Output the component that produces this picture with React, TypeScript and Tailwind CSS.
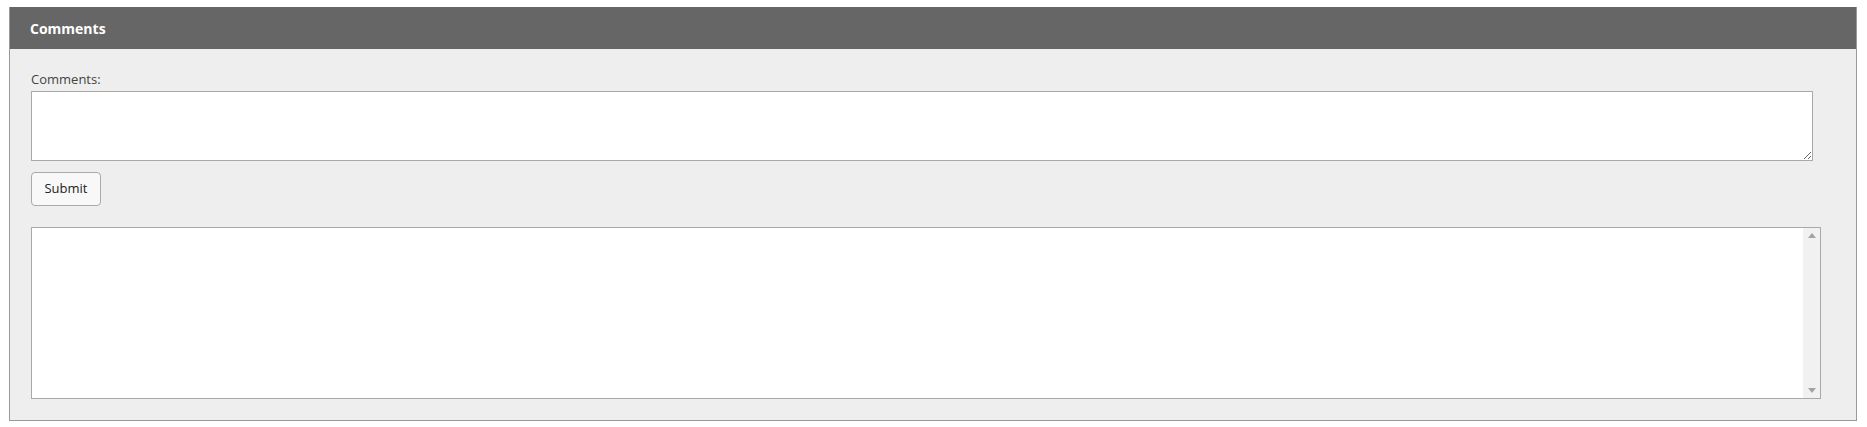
import React from "react";

function ScrollArea() {
  return (
    <div className="flex h-[172px] w-[1790px] border border-[#a9a9a9] bg-white">
      <div className="flex-1" />
      <div className="flex w-[17px] flex-col items-center justify-between bg-[#f1f1f1] py-[5px]">
        <svg width="8" height="5" viewBox="0 0 8 5">
          <path d="M0 5 L4 0 L8 5 Z" fill="#a3a3a3" />
        </svg>
        <svg width="8" height="5" viewBox="0 0 8 5">
          <path d="M0 0 L4 5 L8 0 Z" fill="#a3a3a3" />
        </svg>
      </div>
    </div>
  );
}

export default function App() {
  return (
    <div className="min-h-screen bg-white pl-[9px] pr-[10px] pt-[7px] font-['Open_Sans',sans-serif] text-[#333]">
      <section className="border-x border-b border-[#999] bg-[#eeeeee]">
        {/* Header */}
        <header className="flex h-[42px] items-center bg-[#666666] px-[20px]">
          <h2 className="text-[14px] font-bold text-white">Comments</h2>
        </header>

        {/* Body */}
        <div className="px-[21px] pb-[21px] pt-[20px]">
          <label className="block text-[13px] leading-[21px] text-[#444]">Comments:</label>
          <textarea className="mt-px block h-[70px] w-[1782px] border border-[#a9a9a9] bg-white p-1 text-[13px] outline-none" />
          <button className="mt-[11px] block h-[34px] w-[70px] rounded-[4px] border border-[#aaa] bg-[#f8f8f8] text-[13px] text-[#222]">
            Submit
          </button>
          <div className="mt-[21px]">
            <ScrollArea />
          </div>
        </div>
      </section>
    </div>
  );
}
